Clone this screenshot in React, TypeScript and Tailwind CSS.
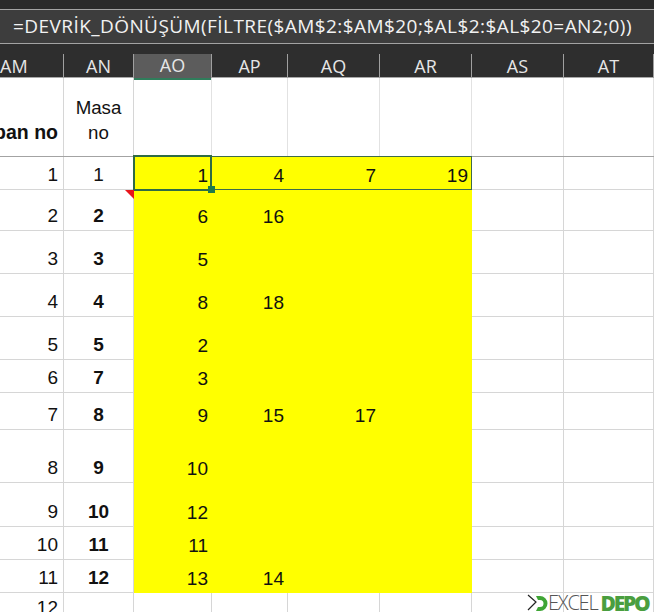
const columns = ["AM", "AN", "AO", "AP", "AQ", "AR", "AS", "AT"];

const gridCols = "grid grid-cols-[64px_70px_78px_76px_92px_92px_92px_90px]";

type Row = {
  height: string;
  no: string;
  table?: string;
  bold?: boolean;
  values: string[];
};

const rows: Row[] = [
  { height: "h-[33px]", no: "1", table: "1", values: ["1", "4", "7", "19"] },
  { height: "h-[41px]", no: "2", table: "2", bold: true, values: ["6", "16", "", ""] },
  { height: "h-[43px]", no: "3", table: "3", bold: true, values: ["5", "", "", ""] },
  { height: "h-[43px]", no: "4", table: "4", bold: true, values: ["8", "18", "", ""] },
  { height: "h-[43px]", no: "5", table: "5", bold: true, values: ["2", "", "", ""] },
  { height: "h-[33px]", no: "6", table: "7", bold: true, values: ["3", "", "", ""] },
  { height: "h-[37px]", no: "7", table: "8", bold: true, values: ["9", "15", "17", ""] },
  { height: "h-[53px]", no: "8", table: "9", bold: true, values: ["10", "", "", ""] },
  { height: "h-[44px]", no: "9", table: "10", bold: true, values: ["12", "", "", ""] },
  { height: "h-[33px]", no: "10", table: "11", bold: true, values: ["11", "", "", ""] },
  { height: "h-[33px]", no: "11", table: "12", bold: true, values: ["13", "14", "", ""] },
];

const cell = "flex items-end border-r border-b border-[#d6d6d6] pb-[3px] leading-[22px]";

function GridRow({ row }: { row: Row }) {
  return (
    <div className={`${gridCols} ${row.height}`}>
      <div className={`${cell} justify-end pr-[5px]`}>{row.no}</div>
      <div className={`${cell} justify-center ${row.bold ? "font-bold" : ""}`}>{row.table}</div>
      {row.values.map((v, i) => (
        <div key={i} className="flex items-end justify-end bg-[#ffff00] pb-[3px] pr-[4px] leading-[22px] text-[#111]">
          {v}
        </div>
      ))}
      <div className={cell} />
      <div className={cell} />
    </div>
  );
}

function Logo() {
  return (
    <div className="absolute left-[527px] top-[594px] flex h-[18px] w-[127px] items-center overflow-hidden">
      <svg width="21" height="18" viewBox="0 0 21 18" className="shrink-0">
        <path d="M1 1l8 7-8 8" fill="none" stroke="#222" strokeWidth="1.2" />
        <path d="M9 2h4a7.5 7.5 0 0 1 0 15H9l2-4h2a3.5 3.5 0 0 0 0-7h-2z" fill="#3fa535" />
      </svg>
      <span className="mr-[3px] font-['Open_Sans',sans-serif] text-[20px] font-light leading-[18px] tracking-[-1.2px] text-[#555]">
        EXCEL
      </span>
      <span className="font-['Open_Sans',sans-serif] text-[21px] font-extrabold leading-[18px] tracking-[-2.2px] text-[#4a9e3f]">
        DEPO
      </span>
    </div>
  );
}

export default function App() {
  return (
    <div className="relative h-[612px] w-[654px] overflow-hidden bg-white font-['Liberation_Sans',sans-serif] text-[19px] text-[#111]">
      <div className="h-[9px] bg-[#2a2a2a]" />
      <div className="flex h-[35px] items-center border-y border-[#a3a3a3] bg-[#3d3d3d] pl-[13px] font-['Open_Sans',sans-serif] text-[19px] tracking-[0.43px] whitespace-nowrap text-[#f2f2f2]">
        =DEVRİK_DÖNÜŞÜM(FİLTRE($AM$2:$AM$20;$AL$2:$AL$20=AN2;0))
      </div>
      <div className="h-[10px] bg-[#2e2e2e]" />

      <div className={`${gridCols} h-[24px] border-b border-[#a8a8a8] bg-[#2e2e2e] font-['Open_Sans',sans-serif] text-[18px] text-[#e6e6e6]`}>
        {columns.map((c, i) => (
          <div
            key={c}
            className={`flex items-center border-r border-[#a0a0a0] pb-[2px] leading-[22px] ${
              i === 0 ? "justify-start" : "justify-center"
            } ${c === "AO" ? "border-b-2 border-b-[#2f7d5b] bg-[#5c5c5c]" : ""}`}
          >
            {c}
          </div>
        ))}
      </div>

      <div className={`${gridCols} h-[79px] border-b border-[#a3a3a3]`}>
        <div className="flex items-end justify-end overflow-hidden border-r border-[#d6d6d6] pb-[11px] pr-[5px] text-[19.5px] leading-[25px] font-bold whitespace-nowrap">
          pan no
        </div>
        <div className="flex items-end justify-center border-r border-[#d6d6d6] pb-[11px] text-center text-[18.7px] leading-[25px]">
          <span>
            Masa
            <br />
            no
          </span>
        </div>
        {columns.slice(2).map((c) => (
          <div key={c} className="border-r border-[#e2e2e2]" />
        ))}
      </div>

      {rows.map((row) => (
        <GridRow key={row.no} row={row} />
      ))}

      <div className={`${gridCols} h-[40px]`}>
        <div className="flex items-start justify-end border-r border-[#d6d6d6] pr-[5px] pt-[4px] leading-[22px]">12</div>
        {columns.slice(1).map((c) => (
          <div key={c} className="border-r border-[#d6d6d6]" />
        ))}
      </div>

      {/* selected range and active cell */}
      <div className="absolute left-[134px] top-[156px] h-[34px] w-[338px] border border-[#3f6b4a]" />
      <div className="absolute left-[133px] top-[155px] h-[36px] w-[79px] border-2 border-[#2f6b45]" />
      <div className="absolute left-[208px] top-[186px] h-[7px] w-[7px] bg-[#1f7a4a]" />
      <div className="absolute left-[125px] top-[190px] h-0 w-0 border-t-[9px] border-l-[9px] border-t-[#e8151b] border-l-transparent" />

      <Logo />
    </div>
  );
}
